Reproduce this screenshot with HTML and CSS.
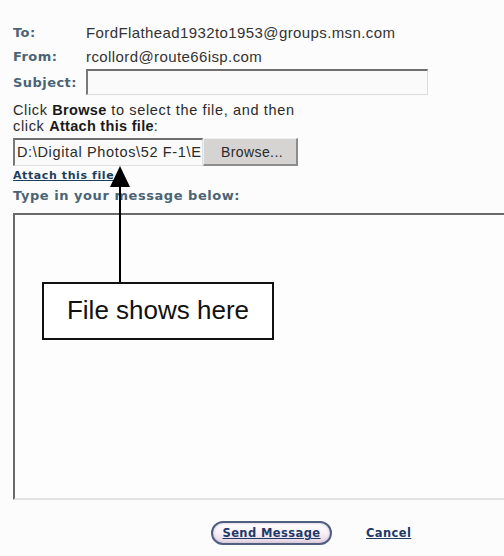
FILE: index.html
```html
<!DOCTYPE html>
<html>
<head>
<meta charset="utf-8">
<title>Post a message</title>
<link rel="stylesheet" href="styles.css">
</head>
<body>
<div class="page">
  <div class="headers">
    <span class="label">To:</span>
    <span class="value">FordFlathead1932to1953@groups.msn.com</span>
    <span class="label">From:</span>
    <span class="value">rcollord@route66isp.com</span>
    <span class="label">Subject:</span>
    <input class="subject" type="text">
  </div>

  <p class="hint">Click <b>Browse</b> to select the file, and then<br>click <b>Attach this file</b>:</p>

  <div class="file-row">
    <div class="file-path">D:\Digital Photos\52 F-1\E</div>
    <button class="browse" type="button">Browse...</button>
  </div>

  <a class="attach" href="#">Attach this file</a>
  <div class="type-label">Type in your message below:</div>

  <textarea class="message"></textarea>

  <div class="actions">
    <a class="send" href="#">Send Message</a>
    <a class="cancel" href="#">Cancel</a>
  </div>

  <!-- callout pointing at the attached file path -->
  <svg class="arrow" width="30" height="122" viewBox="0 0 30 122">
    <polygon points="15,0 5,21 25,21" fill="#000"/>
    <line x1="15" y1="20" x2="15" y2="122" stroke="#000" stroke-width="2"/>
  </svg>
  <div class="callout">File shows here</div>
</div>
</body>
</html>
```

FILE: styles.css
```css
html, body {
  margin: 0;
  padding: 0;
  background: #fcfcfc;
  overflow: hidden;
}

.page {
  position: relative;
  width: 504px;
  height: 556px;
  padding: 20px 0 0 13px;
  box-sizing: border-box;
  font-family: "Liberation Sans", Arial, sans-serif;
  color: #222;
}

.headers {
  display: grid;
  grid-template-columns: 73px 342px;
  grid-template-rows: 24px 25px 26px;
  align-items: center;
}

.label {
  font-family: "DejaVu Sans", Verdana, sans-serif;
  font-weight: bold;
  font-size: 13px;
  letter-spacing: 0.45px;
  color: #4b6475;
}

.value {
  font-size: 15px;
  letter-spacing: 0.4px;
  color: #333;
}

.subject {
  box-sizing: border-box;
  width: 342px;
  height: 26px;
  margin: 0;
  background: #fafafa;
  border-style: solid;
  border-width: 2px 1px 1px 2px;
  border-color: #6e6e6e #dcdcdc #dcdcdc #7a7a7a;
}

.hint {
  margin: 7px 0 0;
  font-size: 14.5px;
  line-height: 16px;
  letter-spacing: 0.65px;
  color: #2a2a2a;
}

.hint b {
  color: #1a1a1a;
  letter-spacing: 0.3px;
}

.file-row {
  display: flex;
  margin-top: 4px;
  height: 28px;
}

.file-path {
  box-sizing: border-box;
  width: 190px;
  height: 28px;
  padding: 4px 0 0 2px;
  font-size: 14.5px;
  letter-spacing: 0.65px;
  white-space: nowrap;
  overflow: hidden;
  background: #fafafa;
  border-style: solid;
  border-width: 2px 1px 1px 2px;
  border-color: #6e6e6e #e0e0e0 #e0e0e0 #7a7a7a;
  color: #2a2a2a;
}

.browse {
  box-sizing: border-box;
  width: 95px;
  height: 28px;
  margin: 0;
  padding: 0 0 0 4px;
  font-family: "Liberation Sans", Arial, sans-serif;
  font-size: 14px;
  letter-spacing: 0.4px;
  color: #2a2a2a;
  text-align: center;
  background: #d5d4d2;
  border-style: solid;
  border-width: 1px 2px 2px 1px;
  border-color: #efefef #8c8c8c #8c8c8c #efefef;
}

.attach {
  display: block;
  width: max-content;
  margin-top: 3px;
  font-family: "DejaVu Sans", Verdana, sans-serif;
  font-weight: bold;
  font-size: 11px;
  letter-spacing: 0.6px;
  line-height: 13px;
  color: #1c3f5c;
}

.type-label {
  margin-top: 6px;
  font-family: "DejaVu Sans", Verdana, sans-serif;
  font-weight: bold;
  font-size: 13px;
  letter-spacing: 0.55px;
  line-height: 16px;
  color: #4b6475;
}

.message {
  display: block;
  box-sizing: border-box;
  width: 520px;
  height: 287px;
  margin: 9px 0 0;
  resize: none;
  background: #fdfdfd;
  border-style: solid;
  border-width: 2px 0 2px 2px;
  border-color: #6a6a6a #6a6a6a #e3e3e3 #6a6a6a;
}

.actions {
  display: flex;
  align-items: center;
  margin-top: 21px;
  padding-left: 198px;
  font-family: "DejaVu Sans", Verdana, sans-serif;
  font-weight: bold;
  font-size: 11.5px;
  letter-spacing: 0.4px;
}

.send {
  box-sizing: border-box;
  width: 121px;
  height: 24px;
  line-height: 20px;
  text-align: center;
  color: #1f3a68;
  border: 2px solid #4f5f7d;
  border-radius: 12px;
  background: linear-gradient(#ffffff, #f6eef4 55%, #e4d4e2);
  box-shadow: inset 0 0 3px #c8b8d0;
}

.cancel {
  margin-left: 34px;
  color: #1f3a68;
}

.arrow {
  position: absolute;
  left: 105px;
  top: 166px;
}

.callout {
  position: absolute;
  left: 42px;
  top: 282px;
  box-sizing: border-box;
  width: 232px;
  height: 58px;
  border: 2px solid #111;
  background: #fff;
  display: flex;
  align-items: center;
  justify-content: center;
  padding-bottom: 2px;
  font-family: "Liberation Sans", Arial, sans-serif;
  font-size: 26px;
  color: #111;
}
```
